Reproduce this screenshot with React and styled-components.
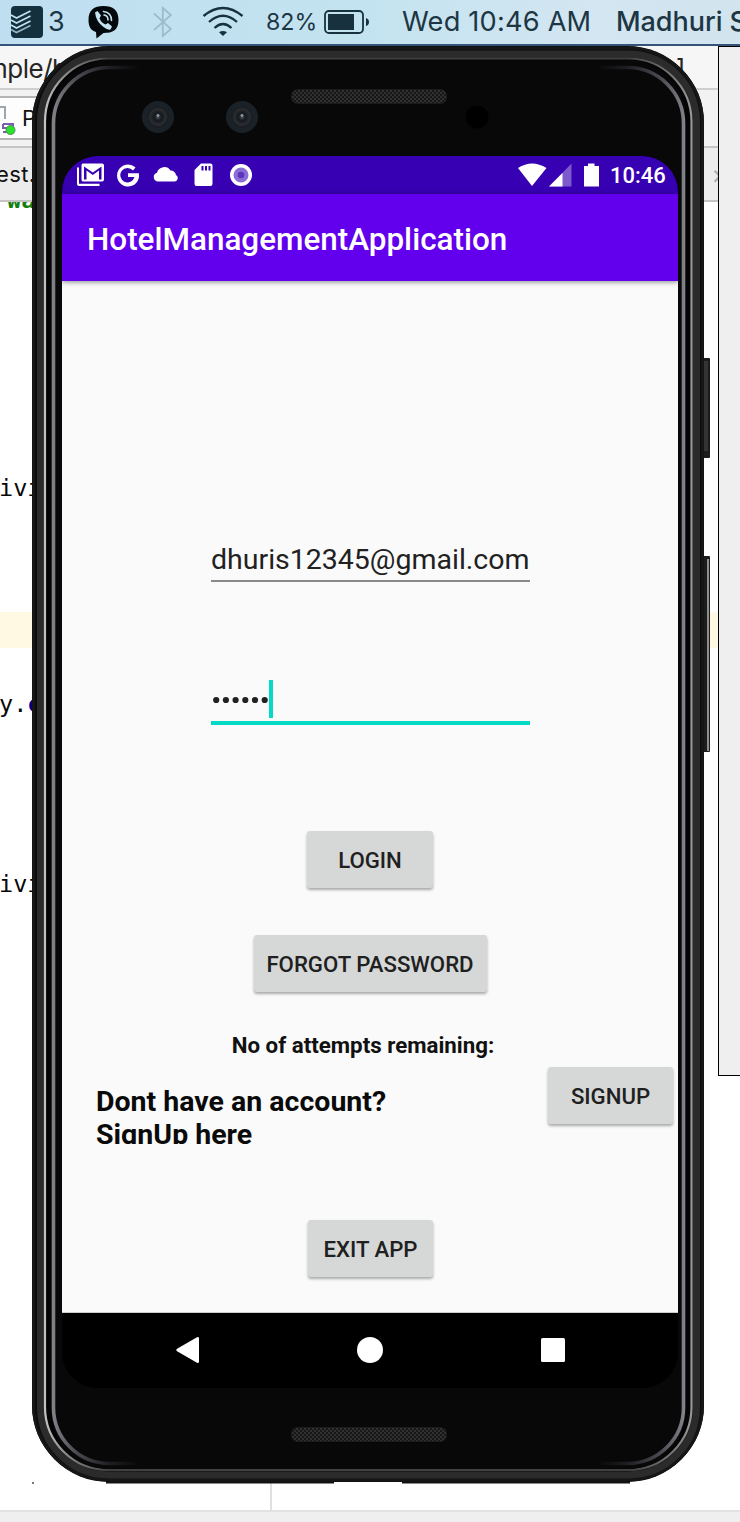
import React from "react";
import styled, { createGlobalStyle, css } from "styled-components";

const Global = createGlobalStyle`
  html, body { margin: 0; padding: 0; background: #fff; }
  * { box-sizing: border-box; }
`;

const Desktop = styled.div`
  position: relative;
  width: 740px;
  height: 1522px;
  overflow: hidden;
  display: flex;
  flex-direction: column;
  background: #fff;
`;

/* ---- menu bar ---- */
const MenuBar = styled.header`
  flex: none;
  display: flex;
  align-items: center;
  height: 46px;
  padding-left: 10px;
  border-bottom: 2px solid #33557a;
  background: linear-gradient(90deg, #bfdff1, #c4e3f0 50%, #d3e6f1 80%, #d2e4ee);
  color: #1c3644;
  font-family: Inter, sans-serif;
  white-space: nowrap;
  overflow: hidden;
`;

const MenuText = styled.span`
  flex: none;
  width: ${(p) => p.$w}px;
  margin-left: ${(p) => p.$gap}px;
  font-size: ${(p) => p.$size}px;
  font-weight: ${(p) => p.$weight || 400};
  letter-spacing: ${(p) => p.$track || 0}px;
  line-height: 44px;
`;

const MenuIcon = styled.svg`
  flex: none;
  display: block;
  margin-left: ${(p) => p.$gap || 0}px;
`;

/* ---- editor window ---- */
const PathBar = styled.div`
  flex: none;
  display: flex;
  justify-content: space-between;
  height: 44px;
  padding-right: 55px;
  background: #f6f6f6;
  border-bottom: 2px solid #cfcfcf;
  font: 26px/45px Inter, sans-serif;
  letter-spacing: -0.5px;
  color: #262626;
`;
const PathText = styled.span`
  margin-left: -15px;
`;
const ToolRow = styled.div`
  flex: none;
  height: 56px;
  padding-top: 6px;
  background: #f2f2f2;
`;
const RunBox = styled.div`
  display: flex;
  align-items: center;
  width: 200px;
  height: 44px;
  border: 2px solid #b5b5b5;
  border-left: 0;
  background: #fdfdfd;
  font: 22px/40px Inter, sans-serif;
  color: #111;
`;
const TabRow = styled.div`
  flex: none;
  display: flex;
  justify-content: space-between;
  height: 56px;
  padding-right: 7px;
  border-top: 2px solid #c4c4c4;
  border-bottom: 2px solid #c4c4c4;
  background: #ececec;
  font: 22px/53px Inter, sans-serif;
  letter-spacing: 0.4px;
  color: #111;
`;
const TabText = styled.span`
  margin-left: -4px;
`;
const TabClose = styled.span`
  color: #aab0b4;
  width: 22px;
  font-size: 27px;
`;
const Code = styled.main`
  flex: 1;
  display: flex;
  flex-direction: column;
  overflow: hidden;
  background: #fff;
  font: 23.5px/36px "DejaVu Sans Mono", monospace;
  color: #080808;
`;
const CodeLine = styled.div`
  flex: none;
  height: 36px;
  margin-top: ${(p) => p.$gap}px;
  padding-left: ${(p) => p.$indent || 0}px;
  background: ${(p) => (p.$current ? "#fff9e3" : "transparent")};
  text-indent: -1px;
  white-space: pre;
`;
const StringText = styled.b`
  color: #118011;
`;
const FieldText = styled.b`
  color: #000088;
`;
const PaneFoot = styled.div`
  flex: none;
  width: 272px;
  height: 28px;
  border-right: 2px solid #e0e0e0;
`;
const StatusStrip = styled.footer`
  flex: none;
  height: 12px;
  border-top: 2px solid #e2e2e2;
  background: #efefef;
`;

/* ---- floating windows ---- */
const SideWindow = styled.aside`
  position: absolute;
  left: 718px;
  top: 46px;
  width: 40px;
  height: 1030px;
  border: 1px solid #000;
  background: #efefef;
`;

const Phone = styled.section`
  position: absolute;
  left: 32px;
  top: 46px;
  width: 680px;
  height: 1438px;
  padding: 110px 34px 0 30px;
`;
const Shell = styled.svg`
  position: absolute;
  left: 0;
  top: 0;
  display: block;
`;

/* ---- phone screen ---- */
const Screen = styled.div`
  position: relative;
  display: flex;
  flex-direction: column;
  width: 616px;
  height: 1232px;
  border-radius: 36px;
  overflow: hidden;
  background: #000;
  font-family: Roboto, sans-serif;
`;
const StatusBar = styled.div`
  flex: none;
  display: flex;
  align-items: center;
  justify-content: space-between;
  height: 38px;
  padding: 0 13px 0 14px;
  background: #3700b3;
`;
const StatusGroup = styled.div`
  display: flex;
  align-items: center;
`;
const Clock = styled.span`
  width: 55px;
  margin-left: 10px;
  padding-top: 2px;
  font-size: 22px;
  font-weight: 500;
  line-height: 36px;
  color: #fff;
  white-space: nowrap;
`;
const AppBar = styled.h1`
  position: relative;
  flex: none;
  height: 87px;
  margin: 0;
  padding-left: 25px;
  background: #6200ee;
  box-shadow: 0 1px 5px rgba(0, 0, 0, 0.45);
  color: #fff;
  font-size: 31.45px;
  font-weight: 500;
  line-height: 91px;
`;
const Form = styled.div`
  flex: none;
  display: flex;
  flex-direction: column;
  align-items: center;
  height: 1032px;
  border-bottom: 1px solid #ccc;
  background: #fafafa;
`;
const Field = styled.div`
  flex: none;
  display: flex;
  align-items: center;
  width: 319px;
  height: 44px;
  margin: ${(p) => p.$gap}px 0 0 1px;
  border-bottom: 2px solid #8a8a8a;
  color: #212121;
  font-size: 28.5px;
  white-space: nowrap;
  ${(p) =>
    p.$focused &&
    css`
      border-bottom: 4px solid #03dac5;
      height: 46px;
      padding-bottom: 2px;
    `}
`;
const Dots = styled.svg`
  display: block;
`;
const Caret = styled.i`
  width: 4px;
  height: 38px;
  background: #03dac5;
`;
const Button = styled.button`
  flex: none;
  display: flex;
  justify-content: center;
  align-items: flex-start;
  width: ${(p) => p.$w}px;
  height: 57px;
  margin: ${(p) => p.$gap || 0}px 0 0 ${(p) => p.$shift || 0}px;
  padding: 1px 0 0;
  border: 0;
  border-radius: 3px;
  background: #d6d7d7;
  box-shadow: 0 2px 3px rgba(0, 0, 0, 0.33);
  color: #202020;
  font: 500 22.2px/57px Roboto, sans-serif;
  white-space: nowrap;
`;
const Attempts = styled.p`
  flex: none;
  margin: 38px 14px 0 0;
  color: #111;
  font-size: 22.3px;
  font-weight: 700;
  line-height: 30px;
`;
const SignupRow = styled.div`
  flex: none;
  display: flex;
  align-items: flex-start;
  justify-content: space-between;
  width: 100%;
  height: 77px;
  margin-top: 7px;
  padding: 0 5px 0 34px;
`;
const Prompt = styled.p`
  width: 330px;
  height: 59px;
  margin: 18px 0 0;
  overflow: hidden;
  color: #0a0a0a;
  font-size: 28.5px;
  font-weight: 700;
  line-height: 33px;
`;
const NavBar = styled.nav`
  flex: 1;
  display: flex;
  justify-content: space-between;
  align-items: center;
  padding: 0 113px 2px 113px;
  background: #000;
`;

const icon = { fill: "#fff" };

function PhoneShell() {
  return (
    <Shell width="680" height="1438" viewBox="32 46 680 1438">
      <defs>
        <linearGradient id="rim" gradientUnits="userSpaceOnUse" x1="44" x2="693" y1="0" y2="0">
          <stop offset="0" stopColor="#c4c4c4" />
          <stop offset=".03" stopColor="#909090" />
          <stop offset=".1" stopColor="#414141" />
          <stop offset=".9" stopColor="#414141" />
          <stop offset=".97" stopColor="#777" />
          <stop offset="1" stopColor="#999" />
        </linearGradient>
        <linearGradient id="glass" gradientUnits="userSpaceOnUse" x1="51" x2="686" y1="0" y2="0">
          <stop offset="0" stopColor="#85868b" />
          <stop offset=".04" stopColor="#4a4a50" />
          <stop offset=".09" stopColor="#202025" />
          <stop offset=".14" stopColor="#080808" />
          <stop offset=".86" stopColor="#080808" />
          <stop offset=".91" stopColor="#202025" />
          <stop offset=".96" stopColor="#4a4a50" />
          <stop offset="1" stopColor="#85868b" />
        </linearGradient>
        <pattern id="mesh" width="4" height="4" patternUnits="userSpaceOnUse">
          <rect width="4" height="4" fill="#171717" />
          <circle cx="1" cy="1" r=".9" fill="#3c3c3c" />
          <circle cx="3" cy="3" r=".9" fill="#3c3c3c" />
        </pattern>
        <radialGradient id="lens">
          <stop offset="0" stopColor="#4a5058" />
          <stop offset=".35" stopColor="#15181c" />
          <stop offset=".75" stopColor="#2a2d30" />
          <stop offset="1" stopColor="#15191d" />
        </radialGradient>
      </defs>
      <rect x="702" y="358" width="8" height="100" rx="1" fill="#1c1c1c" />
      <rect x="704" y="361" width="4" height="90" fill="#343434" />
      <rect x="702" y="556" width="8" height="196" rx="1" fill="#1c1c1c" />
      <rect x="707" y="559" width="2" height="192" fill="#8e8e8e" />
      <rect x="106" y="1480" width="228" height="3.5" fill="#151313" />
      <rect x="402" y="1480" width="228" height="3.5" fill="#151313" />
      <rect x="32" y="1482" width="2" height="2" fill="#777" />
      <rect x="32" y="46" width="672" height="1436" rx="77" fill="#0c0c0c" />
      <rect x="33.5" y="48" width="669" height="1432" rx="75" fill="none" stroke="#161616" strokeWidth="3" />
      <rect x="40.5" y="54" width="656" height="1421" rx="68" fill="none" stroke="#2b2b2b" strokeWidth="7" />
      <rect x="45" y="58.5" width="646.5" height="1411.5" rx="63" fill="#040404" stroke="url(#rim)" strokeWidth="2.2" />
      <rect x="51" y="60" width="635" height="1409" rx="58" fill="#080808" />
      <rect x="53.5" y="67.5" width="630" height="1396" rx="56" fill="none" stroke="url(#glass)" strokeWidth="3.6" />
      <rect x="291.5" y="89.5" width="155" height="14" rx="6" fill="url(#mesh)" stroke="#1c1c1c" />
      <rect x="291.5" y="1427.5" width="155" height="14" rx="6" fill="url(#mesh)" stroke="#1c1c1c" />
      {[158, 242].map((cx) => (
        <g key={cx}>
          <circle cx={cx} cy="117" r="16" fill="#1a2127" />
          <circle cx={cx} cy="117" r="10.5" fill="url(#lens)" />
          <circle cx={cx} cy="115.500" r="1.4" fill="#8d949e" />
        </g>
      ))}
      <circle cx="477" cy="117" r="11.5" fill="#000" />
    </Shell>
  );
}

function MenuBarItems() {
  return (
    <MenuBar>
      <MenuIcon $gap={1} width="32" height="32" viewBox="0 0 32 32">
        <rect width="32" height="32" rx="4" fill="#14303f" />
        <g fill="none" stroke="#c1e1f1" strokeWidth="1.700">
          <path d="M0 9 5.500 12 19.500 5" />
          <path d="M0 14 5.500 17 19.500 10" />
          <path d="M0 19 5.500 22 19.500 15" />
          <path d="M0 23.500 5.500 26.500 19.500 19.500" opacity=".75" />
        </g>
      </MenuIcon>
      <MenuText $gap={5} $w={17} $size={27}>3</MenuText>
      <MenuIcon $gap={23} width="31" height="33" viewBox="0 0 31 33">
        <path fill="#02080c" d="M15.5 0C25 0 30.500 4 30.500 14S25 27 15.500 27L8.500 32.500 8 26C2.500 24.500.5 20 .5 14 .5 4 6 0 15.500 0Z" />
        <path fill="#c4e3f1" d="M7 6.500 9.500 5 13 9.500 11.500 12.500Q13.500 17 17.500 18.500L20 17 24 20.500 22.500 23.500Q20 24.500 15.500 21 8 15.500 7 6.500Z" />
        <g fill="none" stroke="#c4e3f1" strokeWidth="1.6" strokeLinecap="round">
          <path d="M15.500 5.500Q23.500 6.500 23.500 14.500" />
          <path d="M16 9Q20 9.500 20 14" />
        </g>
      </MenuIcon>
      <MenuIcon $gap={34} width="19" height="32" viewBox="0 0 19 32">
        <path d="M1 7.500 18 23 9.800 30V2L18 9 1 24" fill="none" stroke="#9dbccb" strokeWidth="1.800" />
      </MenuIcon>
      <MenuIcon $gap={30} width="42" height="32" viewBox="0 0 42 32">
        <g fill="none" stroke="#17313f" strokeWidth="2.300">
          <path d="M1.500 10Q21-6 40.500 10" />
          <path d="M7 16Q21 3.500 35 16" />
          <path d="M12.500 22Q21 14 29.500 22" />
        </g>
        <path d="M17 26.300Q21 23.500 25 26.300L21 30Z" fill="#17313f" />
      </MenuIcon>
      <MenuText $gap={22} $w={50} $size={23.2}>82%</MenuText>
      <MenuIcon $gap={8} width="46" height="24" viewBox="0 0 46 24">
        <rect x="1" y="1" width="38" height="22" rx="4" fill="none" stroke="#17313f" strokeWidth="1.800" />
        <rect x="4" y="4" width="26" height="16" fill="#17313f" />
        <path d="M42 8Q45 9 45 12T42 16Z" fill="#17313f" />
      </MenuIcon>
      <MenuText $gap={32} $w={190} $size={27.2} $track={0.2}>Wed 10:46 AM</MenuText>
      <MenuText $gap={24} $w={140} $size={27} $weight={500} $track={-0.05}>Madhuri S</MenuText>
    </MenuBar>
  );
}

export default function App() {
  return (
    <Desktop>
      <Global />
      <MenuBarItems />
      <PathBar>
        <PathText>mple/b</PathText>
        <span>]</span>
      </PathBar>
      <ToolRow>
        <RunBox>
          <MenuIcon width="22" height="40" viewBox="0 0 22 40">
            <path d="M0 9H5V21" fill="none" stroke="#9aa7b0" strokeWidth="2" />
            <path d="M3 26H13V34H3M3 26V30H8" fill="none" stroke="#7a5fb0" strokeWidth="2" />
            <circle cx="10.500" cy="32" r="4.500" fill="#2ae22a" stroke="#4d8d5e" />
          </MenuIcon>
          P
        </RunBox>
      </ToolRow>
      <TabRow>
        <TabText>est.</TabText>
        <TabClose>×</TabClose>
      </TabRow>
      <Code>
        <CodeLine $gap={-20} $indent={8}><StringText>wa</StringText></CodeLine>
        <CodeLine $gap={252}>ivi</CodeLine>
        <CodeLine $gap={106} $current />
        <CodeLine $gap={38}>y.<FieldText>c</FieldText></CodeLine>
        <CodeLine $gap={144}>ivi</CodeLine>
      </Code>
      <PaneFoot />
      <StatusStrip />
      <SideWindow />
      <Phone>
        <PhoneShell />
        <Screen>
          <StatusBar>
            <StatusGroup>
              <svg width="177" height="24" viewBox="0 0 177 24" {...icon}>
                <path d="M1 4.500H3V20.800H23.500V23H3Q1 23 1 21Z" />
                <path fillRule="evenodd" d="M7 .5H26Q28 .5 28 2.500V16.500Q28 18.500 26 18.500H7Q5.500 18.500 5.500 16.500V2.500Q5.500.5 7 .5ZM8 3.500V16.500H10.500V7.500L16.800 12 23 7.500V16.500H25.500V3.500L16.800 9.500Z" />
                <path d="M59.500 4.500 57 7.500A7.200 7.200 0 1 0 58.500 14H52V10.300H62.800A11 11 0 1 1 59.500 4.500Z" />
                <path d="M82 18.500A4.500 4.500 0 0 1 81 9.700 7.500 7.500 0 0 1 94.500 7.500 5.200 5.200 0 0 1 100 12 3.500 3.500 0 0 1 99 18.500Z" />
                <path fillRule="evenodd" d="M125 .5H134.500Q136.500.5 136.500 2.500V21Q136.500 23 134.500 23H120.500Q118.500 23 118.500 21V7ZM125.500 3V7.500H127.500V3ZM129 3V7.500H131V3ZM132.500 3V7.500H134.500V3Z" />
                <circle cx="165" cy="12" r="11" />
                <circle cx="165" cy="12" r="7.500" fill="#8c6dd6" />
                <circle cx="165" cy="12" r="3.300" fill="#5a35bd" />
              </svg>
            </StatusGroup>
            <StatusGroup>
              <svg width="82" height="24" viewBox="0 0 82 24" {...icon}>
                <path d="M0 5Q14-4 28.500 5L14 23Z" />
                <path d="M31 23.500 53.500.5V23.500Z" opacity=".35" />
                <path d="M31 23.500 44.500 10V23.500Z" />
                <path d="M66 3H70V.5H76.500V3H81V23.500H66Z" />
              </svg>
              <Clock>10:46</Clock>
            </StatusGroup>
          </StatusBar>
          <AppBar>HotelManagementApplication</AppBar>
          <Form>
            <Field $gap={257}>dhuris12345@gmail.com</Field>
            <Field $gap={97} $focused>
              <Dots width="58" height="38">
                {[0, 1, 2, 3, 4, 5].map((i) => (
                  <circle key={i} cx={5.200 + i * 9.700} cy="20" r="3.100" fill="#212121" />
                ))}
              </Dots>
              <Caret />
            </Field>
            <Button $w={126} $gap={106}>LOGIN</Button>
            <Button $w={233} $gap={47}>FORGOT PASSWORD</Button>
            <Attempts>No of attempts remaining:</Attempts>
            <SignupRow>
              <Prompt>Dont have an account?<br />SignUp here</Prompt>
              <Button $w={125}>SIGNUP</Button>
            </SignupRow>
            <Button $w={125} $gap={76} $shift={1}>EXIT APP</Button>
          </Form>
          <NavBar>
            <svg width="25" height="28" viewBox="0 0 25 28" {...icon}>
              <path d="M2.500 12.500 22 1.200Q24 .5 24 2.500V25.500Q24 27.500 22 26.800L2.500 15.500Q0 14 2.500 12.500Z" />
            </svg>
            <svg width="27" height="26" {...icon}><circle cx="13" cy="13" r="13" /></svg>
            <svg width="24" height="24" {...icon}><rect width="24" height="24" rx="1.500" /></svg>
          </NavBar>
        </Screen>
      </Phone>
    </Desktop>
  );
}
